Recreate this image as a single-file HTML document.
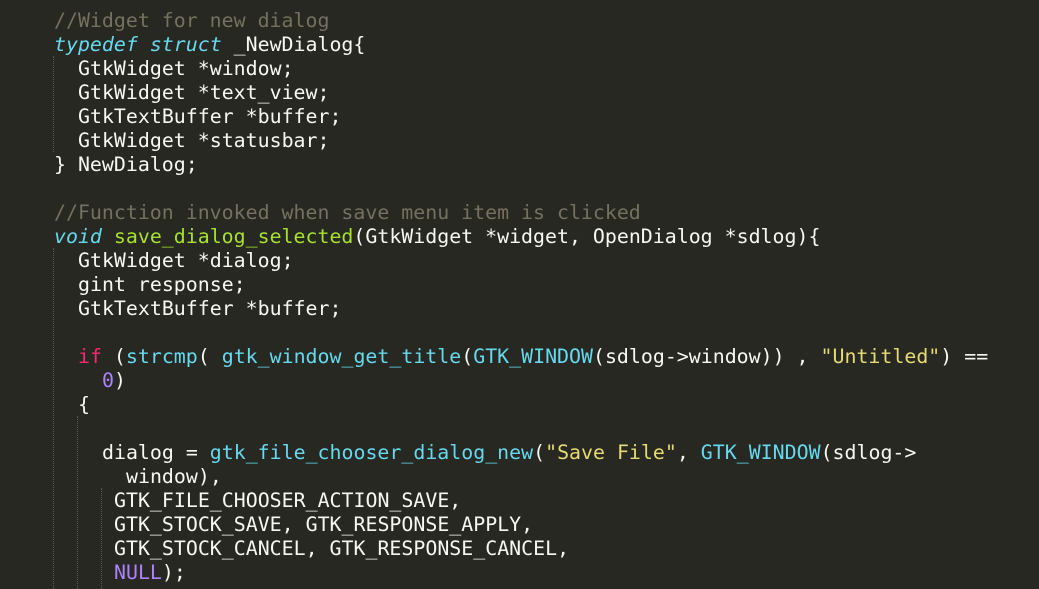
<!DOCTYPE html>
<html><head><meta charset="utf-8"><style>
html,body{margin:0;padding:0}
body{width:1039px;height:588px;background:#272822;overflow:hidden;position:relative;font-family:"DejaVu Sans Mono","Liberation Mono",monospace;font-size:19.9px;color:#F8F8F2}
.w{position:absolute;left:0;top:1px;width:1039px;height:588px}
.l{position:absolute;height:24px;line-height:24px;white-space:pre}
.c{color:#75715E}.k{color:#66D9EF;font-style:italic}.f{color:#A6E22E}.b{color:#66D9EF}.s{color:#E6DB74}.r{color:#F92672}.n{color:#AE81FF}
.g{position:absolute;width:0;border-left:1px dotted #5a5a50}
</style></head><body>
<div class="g" style="left:53px;top:56px;height:96px"></div>
<div class="g" style="left:53px;top:248px;height:340px"></div>
<div class="g" style="left:77px;top:416px;height:172px"></div>
<div class="g" style="left:101px;top:488px;height:100px"></div>
<div class="w">
<div class="l c" style="left:54px;top:8px">//Widget for new dialog</div>
<div class="l" style="left:54px;top:32px"><span class="k">typedef</span> <span class="k">struct</span> _NewDialog{</div>
<div class="l" style="left:78px;top:56px">GtkWidget *window;</div>
<div class="l" style="left:78px;top:80px">GtkWidget *text_view;</div>
<div class="l" style="left:78px;top:104px">GtkTextBuffer *buffer;</div>
<div class="l" style="left:78px;top:128px">GtkWidget *statusbar;</div>
<div class="l" style="left:54px;top:152px">} NewDialog;</div>
<div class="l c" style="left:54px;top:200px">//Function invoked when save menu item is clicked</div>
<div class="l" style="left:54px;top:224px"><span class="k">void</span> <span class="f">save_dialog_selected</span>(GtkWidget *widget, OpenDialog *sdlog){</div>
<div class="l" style="left:78px;top:248px">GtkWidget *dialog;</div>
<div class="l" style="left:78px;top:272px">gint response;</div>
<div class="l" style="left:78px;top:296px">GtkTextBuffer *buffer;</div>
<div class="l" style="left:78px;top:344px"><span class="r">if</span> (<span class="b">strcmp</span>( <span class="b">gtk_window_get_title</span>(<span class="b">GTK_WINDOW</span>(sdlog-&gt;window)) , <span class="s">"Untitled"</span>) ==</div>
<div class="l" style="left:102px;top:368px"><span class="n">0</span>)</div>
<div class="l" style="left:78px;top:392px">{</div>
<div class="l" style="left:102px;top:440px">dialog = <span class="b">gtk_file_chooser_dialog_new</span>(<span class="s">"Save File"</span>, <span class="b">GTK_WINDOW</span>(sdlog-&gt;</div>
<div class="l" style="left:126px;top:464px">window),</div>
<div class="l" style="left:114px;top:488px">GTK_FILE_CHOOSER_ACTION_SAVE,</div>
<div class="l" style="left:114px;top:512px">GTK_STOCK_SAVE, GTK_RESPONSE_APPLY,</div>
<div class="l" style="left:114px;top:536px">GTK_STOCK_CANCEL, GTK_RESPONSE_CANCEL,</div>
<div class="l" style="left:114px;top:560px"><span class="n">NULL</span>);</div>
</div>
</body></html>
